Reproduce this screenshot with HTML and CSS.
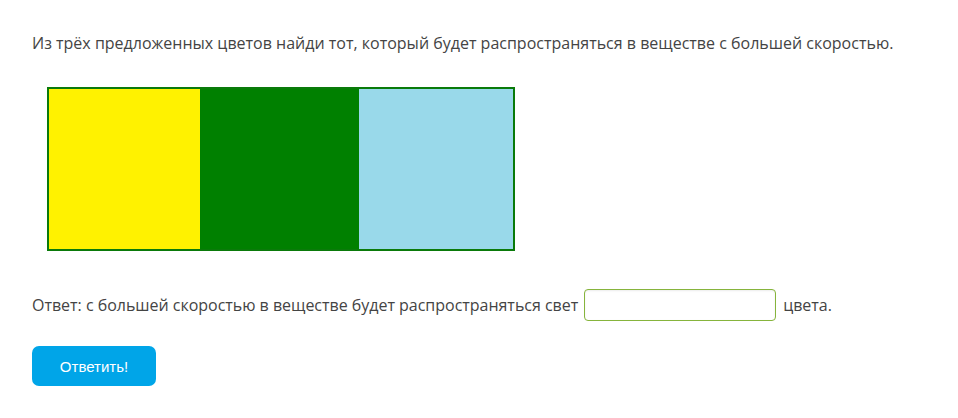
FILE: index.html
```html
<!DOCTYPE html>
<html lang="ru">
<head>
<meta charset="utf-8">
<link rel="stylesheet" href="styles.css">
</head>
<body>
<div class="task">
  <p class="question">Из трёх предложенных цветов найди тот, который будет распространяться в веществе с большей скоростью.</p>
  <div class="colors">
    <div class="sw yellow"></div>
    <div class="sw green"></div>
    <div class="sw blue"></div>
  </div>
  <div class="answer">
    <span>Ответ: с большей скоростью в веществе будет распространяться свет</span>
    <input class="field" type="text">
    <span>цвета.</span>
  </div>
  <button class="submit">Ответить!</button>
</div>
</body>
</html>
```

FILE: styles.css
```css
html, body {
  margin: 0;
  padding: 0;
  background: #ffffff;
}
.task {
  padding: 32px 0 0 32px;
  font-family: "Open Sans", "Noto Sans", sans-serif;
  font-size: 16px;
  color: #444444;
}
.question {
  margin: 0;
  line-height: 22px;
}
.colors {
  display: flex;
  width: 464px;
  height: 160px;
  border: 2px solid #0a7a0a;
  margin: 33px 0 0 15px;
}
.sw { height: 100%; }
.yellow { width: 151px; background: #fff200; }
.green { width: 159px; background: #008000; }
.blue { flex: 1; background: #99d9ea; }
.answer {
  display: flex;
  align-items: center;
  gap: 6px;
  margin-top: 37px;
  height: 34px;
}
.answer span { letter-spacing: -0.02px; }
.field {
  width: 192px;
  height: 32px;
  box-sizing: border-box;
  border: 1px solid #86b43c;
  border-radius: 4px;
  margin: 0 1px 0 0;
  padding: 0 8px;
  background: #fff;
  box-shadow: inset 0 1px 2px rgba(0,0,0,0.08);
}
.submit {
  display: block;
  margin-top: 24px;
  width: 124px;
  height: 40px;
  border: none;
  border-radius: 7px;
  background: #00a5e8;
  color: #ffffff;
  font-family: "Liberation Sans", Arial, sans-serif;
  font-size: 15px;
  cursor: pointer;
}
```
